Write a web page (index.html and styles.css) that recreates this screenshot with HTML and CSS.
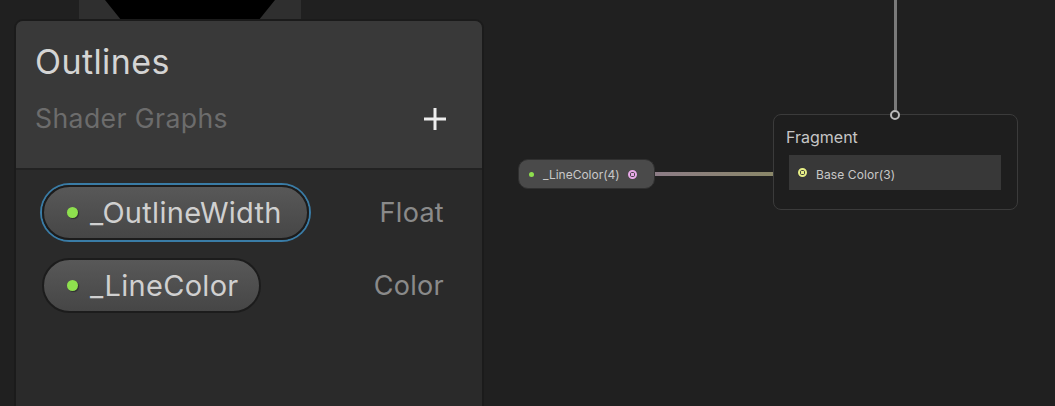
FILE: index.html
```html
<!DOCTYPE html>
<html>
<head>
<meta charset="utf-8">
<link rel="stylesheet" href="styles.css">
</head>
<body>
<div class="canvas">
  <svg class="edges" width="1055" height="406" viewBox="0 0 1055 406">
    <defs>
      <linearGradient id="eg" x1="656" y1="0" x2="800" y2="0" gradientUnits="userSpaceOnUse">
        <stop offset="0" stop-color="#8c7c86"/>
        <stop offset="1" stop-color="#8a8a62"/>
      </linearGradient>
    </defs>
    <rect x="894" y="0" width="3" height="110" fill="#7a7a7a"/>
    <rect x="655" y="172" width="142" height="4" fill="url(#eg)"/>
  </svg>

  <div class="top-piece"><div class="octa"></div></div>

  <div class="blackboard">
    <div class="bb-header">
      <div class="bb-title">Outlines</div>
      <div class="bb-sub-row">
        <div class="bb-sub">Shader Graphs</div>
        <svg class="plus" width="24" height="24" viewBox="0 0 24 24"><path d="M12 1v22M1 12h22" stroke="#eeeeee" stroke-width="3"/></svg>
      </div>
    </div>
    <div class="bb-body">
      <div class="prop-row">
        <div class="pill selected"><span class="dot"></span><span class="pill-text">_OutlineWidth</span></div>
        <div class="prop-type">Float</div>
      </div>
      <div class="prop-row">
        <div class="pill"><span class="dot"></span><span class="pill-text">_LineColor</span></div>
        <div class="prop-type">Color</div>
      </div>
    </div>
  </div>

  <div class="prop-node">
    <span class="dot small"></span>
    <span class="node-text">_LineColor(4)</span>
    <span class="port pink"></span>
  </div>

  <div class="frag-node">
    <span class="top-port"></span>
    <div class="frag-title">Fragment</div>
    <div class="frag-slot">
      <span class="port yellow"></span>
      <span class="node-text">Base Color(3)</span>
    </div>
  </div>
</div>
</body>
</html>
```

FILE: styles.css
```css
html, body {
  margin: 0;
  padding: 0;
  background: #202020;
  overflow: hidden;
}
.canvas {
  position: relative;
  width: 1055px;
  height: 406px;
  overflow: hidden;
  font-family: Inter, "Noto Sans", sans-serif;
}
.edges {
  position: absolute;
  left: 0;
  top: 0;
}
.top-piece {
  position: absolute;
  left: 79px;
  top: 0;
  width: 222px;
  height: 19px;
  background: #2f2f2f;
  display: flex;
  justify-content: center;
}
.octa {
  width: 170px;
  height: 19px;
  background: #000;
  clip-path: polygon(0 0, 100% 0, 91% 100%, 9% 100%);
}
.blackboard {
  position: absolute;
  left: 14px;
  top: 19px;
  width: 466px;
  height: 420px;
  border: 2px solid #1b1b1b;
  border-radius: 9px;
  background: #2a2a2a;
  overflow: hidden;
  display: flex;
  flex-direction: column;
}
.bb-header {
  background: #393939;
  height: 147px;
  border-bottom: 2px solid #222222;
  padding: 0 33px 0 19px;
  display: flex;
  flex-direction: column;
}
.bb-title {
  color: #d4d4d4;
  font-size: 34px;
  line-height: 40px;
  margin-top: 21px;
  letter-spacing: 0.4px;
}
.bb-sub-row {
  display: flex;
  justify-content: space-between;
  align-items: center;
  margin-top: 19px;
}
.bb-sub {
  color: #6c6c6c;
  font-size: 26.6px;
  line-height: 34px;
  letter-spacing: 0.4px;
}
.plus {
  display: block;
  margin-right: 2px;
  margin-top: 1px;
}
.bb-body {
  display: flex;
  flex-direction: column;
  gap: 18px;
  padding: 15px 38px 0 26px;
}
.prop-row {
  display: flex;
  justify-content: space-between;
  align-items: center;
}
.pill {
  height: 51px;
  border: 2px solid #1c1c1c;
  border-radius: 28px;
  background: linear-gradient(#585858, #464646);
  display: flex;
  align-items: center;
  padding: 0 20px 0 23px;
  box-sizing: content-box;
}
.pill.selected {
  box-shadow: 0 0 0 2px #3a7ca6;
  padding-right: 25px;
}
.dot {
  width: 11px;
  height: 11px;
  border-radius: 50%;
  background: #8ee04e;
  box-shadow: 1px 1px 1px rgba(0,0,0,0.4);
  flex: none;
}
.pill-text {
  color: #d0d0d0;
  font-size: 29px;
  margin-left: 12px;
  letter-spacing: 0.3px;
}
.prop-type {
  color: #8a8a8a;
  font-size: 27px;
  letter-spacing: 0.3px;
}
.prop-node {
  position: absolute;
  left: 518px;
  top: 159px;
  width: 137px;
  height: 30px;
  box-sizing: border-box;
  border-radius: 10px;
  background: #4a4a4a;
  border: 1px solid #303030;
  display: flex;
  align-items: center;
  padding-left: 10px;
}
.dot.small {
  width: 5px;
  height: 5px;
  box-shadow: none;
}
.node-text {
  color: #c8c8c8;
  font-size: 12px;
  margin-left: 9px;
}
.port {
  width: 9px;
  height: 9px;
  box-sizing: border-box;
  border-radius: 50%;
  flex: none;
}
.port.pink {
  border: 2px solid #e7a9e7;
  background: radial-gradient(circle, #e7a9e7 0 1.5px, #3d3d3d 2px);
  margin-left: 8px;
}
.port.yellow {
  border: 2px solid #e6ee86;
  background: radial-gradient(circle, #e6ee86 0 1.5px, #3a3a3a 2px);
}
.frag-node {
  position: absolute;
  left: 773px;
  top: 114px;
  width: 245px;
  height: 96px;
  box-sizing: border-box;
  border: 1px solid #3b3b3b;
  border-radius: 8px;
  background: #1e1e1e;
  padding: 0 15px 0 15px;
}
.top-port {
  position: absolute;
  left: 116px;
  top: -5px;
  width: 10px;
  height: 10px;
  box-sizing: border-box;
  border: 2px solid #b9b9b9;
  border-radius: 50%;
  background: #262626;
}
.frag-title {
  color: #c6c6c6;
  font-size: 16px;
  line-height: 20px;
  margin-top: 12px;
  margin-left: -3px;
}
.frag-slot {
  margin-top: 8px;
  height: 35px;
  width: 212px;
  background: #383838;
  display: flex;
  align-items: center;
  padding-left: 9px;
  box-sizing: border-box;
}
.frag-slot .node-text {
  margin-left: 9px;
  padding-top: 3px;
  letter-spacing: 0.1px;
}
```
